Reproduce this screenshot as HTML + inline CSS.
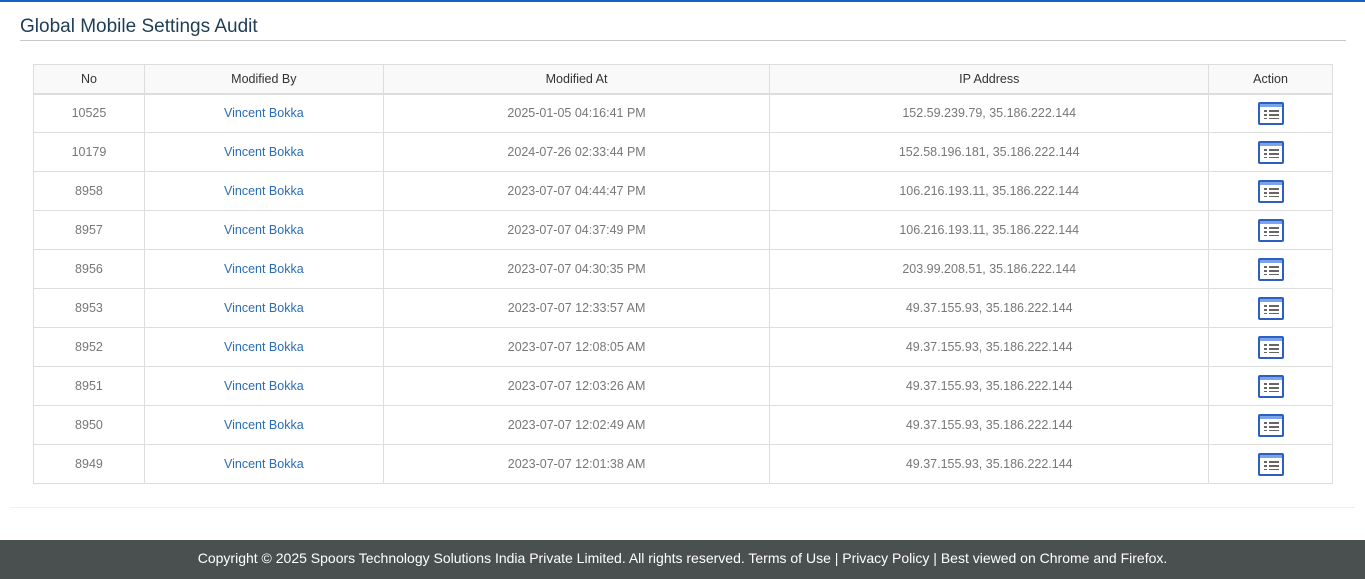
<!DOCTYPE html>
<html><head><meta charset="utf-8"><style>
*{margin:0;padding:0;box-sizing:border-box}
body{width:1365px;height:579px;background:#fff;font-family:"Liberation Sans",sans-serif;position:relative;overflow:hidden}
.top{position:absolute;left:0;top:0;width:1365px;height:2px;background:#1a5fc4}
h1{position:absolute;left:20px;top:16px;font-size:19px;font-weight:normal;color:#1f3d55}
.hr{position:absolute;left:20px;top:40px;width:1326px;height:1px;background:#c8c8c8}
table{position:absolute;left:33px;top:64px;width:1300px;border-collapse:collapse;font-size:12.5px}
td,th{border:1px solid #ddd;text-align:center;color:#777;font-weight:normal}
th{height:29px;background:#f9f9f9;color:#333;border-bottom:2px solid #ddd}
td{height:39px}
td.n{color:#2a6db5}
.ic{display:inline-block;width:26px;height:23px;border:2px solid #2b5fc2;border-radius:2px;background:#fff;position:relative;vertical-align:middle;box-shadow:inset 0 3px 0 #7aa3e8}
.ic::before{content:"";position:absolute;left:4px;top:6px;width:3px;height:9px;background:repeating-linear-gradient(#666 0 2px,transparent 2px 4px)}
.ic::after{content:"";position:absolute;left:9px;top:6px;width:10px;height:9px;background:repeating-linear-gradient(#666 0 2px,transparent 2px 4px)}
.sep{position:absolute;left:10px;top:507px;width:1345px;height:1px;background:#f0f0f0}
.foot{position:absolute;left:0;top:540px;width:1365px;height:39px;background:#4a5050;color:#fff;font-size:14px;text-align:center;line-height:37px}
</style></head><body>
<div class="top"></div>
<h1>Global Mobile Settings Audit</h1><div class="hr"></div>
<table>
<colgroup><col style="width:111px"><col style="width:239px"><col style="width:387px"><col style="width:439px"><col style="width:124px"></colgroup>
<tr><th>No</th><th>Modified By</th><th>Modified At</th><th>IP Address</th><th>Action</th></tr>
<tr><td>10525</td><td class="n">Vincent Bokka</td><td>2025-01-05 04:16:41 PM</td><td>152.59.239.79, 35.186.222.144</td><td><span class="ic"></span></td></tr>
<tr><td>10179</td><td class="n">Vincent Bokka</td><td>2024-07-26 02:33:44 PM</td><td>152.58.196.181, 35.186.222.144</td><td><span class="ic"></span></td></tr>
<tr><td>8958</td><td class="n">Vincent Bokka</td><td>2023-07-07 04:44:47 PM</td><td>106.216.193.11, 35.186.222.144</td><td><span class="ic"></span></td></tr>
<tr><td>8957</td><td class="n">Vincent Bokka</td><td>2023-07-07 04:37:49 PM</td><td>106.216.193.11, 35.186.222.144</td><td><span class="ic"></span></td></tr>
<tr><td>8956</td><td class="n">Vincent Bokka</td><td>2023-07-07 04:30:35 PM</td><td>203.99.208.51, 35.186.222.144</td><td><span class="ic"></span></td></tr>
<tr><td>8953</td><td class="n">Vincent Bokka</td><td>2023-07-07 12:33:57 AM</td><td>49.37.155.93, 35.186.222.144</td><td><span class="ic"></span></td></tr>
<tr><td>8952</td><td class="n">Vincent Bokka</td><td>2023-07-07 12:08:05 AM</td><td>49.37.155.93, 35.186.222.144</td><td><span class="ic"></span></td></tr>
<tr><td>8951</td><td class="n">Vincent Bokka</td><td>2023-07-07 12:03:26 AM</td><td>49.37.155.93, 35.186.222.144</td><td><span class="ic"></span></td></tr>
<tr><td>8950</td><td class="n">Vincent Bokka</td><td>2023-07-07 12:02:49 AM</td><td>49.37.155.93, 35.186.222.144</td><td><span class="ic"></span></td></tr>
<tr><td>8949</td><td class="n">Vincent Bokka</td><td>2023-07-07 12:01:38 AM</td><td>49.37.155.93, 35.186.222.144</td><td><span class="ic"></span></td></tr>
</table>
<div class="sep"></div>
<div class="foot">Copyright © 2025 Spoors Technology Solutions India Private Limited. All rights reserved. Terms of Use | Privacy Policy | Best viewed on Chrome and Firefox.</div>
</body></html>
